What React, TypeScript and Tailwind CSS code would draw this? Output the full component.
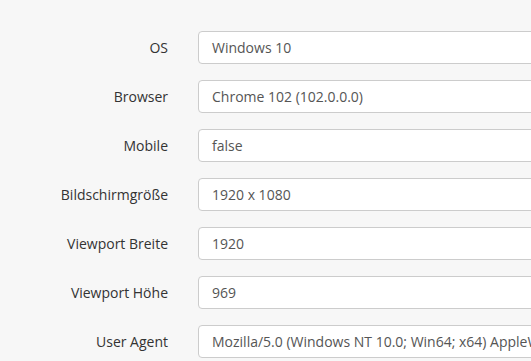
import React from "react";

const rows: [string, string][] = [
  ["OS", "Windows 10"],
  ["Browser", "Chrome 102 (102.0.0.0)"],
  ["Mobile", "false"],
  ["Bildschirmgröße", "1920 x 1080"],
  ["Viewport Breite", "1920"],
  ["Viewport Höhe", "969"],
  ["User Agent", "Mozilla/5.0 (Windows NT 10.0; Win64; x64) AppleWebKit/537.36 (KHTML, like Gecko) Chrome/102.0.0.0 Safari/537.36"],
];

export default function App() {
  return (
    <div
      className="w-[531px] h-[361px] overflow-hidden bg-[#f7f7f7]"
      style={{ fontFamily: '"Open Sans", "Noto Sans", sans-serif' }}
    >
      <div className="w-[800px] pt-[31px] flex flex-col gap-[16px]">
        {rows.map(([label, value]) => (
          <div key={label} className="flex items-center">
            <div className="w-[168px] text-right text-[14px] text-[#333]">{label}</div>
            <div className="ml-[30px] flex-1 h-[33px] bg-white border border-[#ccc] rounded-[4px] px-[13px] flex items-center text-[14px] text-[#555] whitespace-nowrap overflow-hidden">
              {value}
            </div>
          </div>
        ))}
      </div>
    </div>
  );
}
